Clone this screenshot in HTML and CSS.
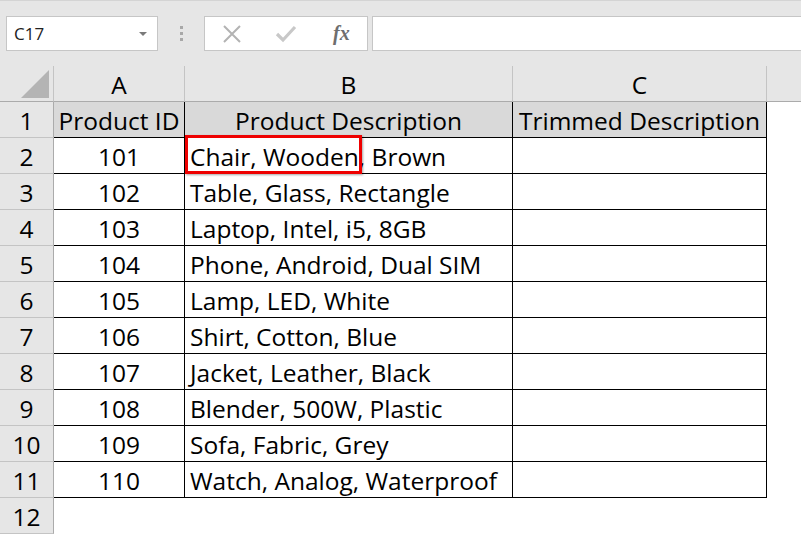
FILE: index.html
```html
<!DOCTYPE html>
<html lang="en">
<head>
    <meta charset="UTF-8">
    <title>Trimmed Description</title>
    <link rel="stylesheet" href="styles.css">
</head>
<body>
    <div class="formula-bar">
        <div class="name-box">
            <span>C17</span>
            <span class="drop"></span>
        </div>
        <div class="grip"><span></span><span></span><span></span></div>
        <div class="fx-buttons">
            <svg width="20" height="20" viewBox="0 0 20 20"><path d="M2 2 L18 18 M18 2 L2 18" stroke="#b3b3b3" stroke-width="2" fill="none"/></svg>
            <svg width="22" height="20" viewBox="0 0 22 20"><path d="M2 10 L8 16 L20 3" stroke="#c8c8c8" stroke-width="3.2" fill="none"/></svg>
            <span class="fx">fx</span>
        </div>
        <div class="formula-input"></div>
    </div>

    <div class="sheet">
        <!-- column headers -->
        <div class="corner"><div class="tri"></div></div>
        <div class="col-head">A</div>
        <div class="col-head">B</div>
        <div class="col-head">C</div>
        <div class="col-head last"></div>

        <div class="row-head">1</div>
        <div class="cell title">Product ID</div>
        <div class="cell title">Product Description</div>
        <div class="cell title">Trimmed Description</div>
        <div class="blank"></div>

        <div class="row-head">2</div>
        <div class="cell num">101</div>
        <div class="cell text"><span class="mark"></span>Chair, Wooden, Brown</div>
        <div class="cell"></div>
        <div class="blank"></div>

        <div class="row-head">3</div>
        <div class="cell num">102</div>
        <div class="cell text">Table, Glass, Rectangle</div>
        <div class="cell"></div>
        <div class="blank"></div>

        <div class="row-head">4</div>
        <div class="cell num">103</div>
        <div class="cell text">Laptop, Intel, i5, 8GB</div>
        <div class="cell"></div>
        <div class="blank"></div>

        <div class="row-head">5</div>
        <div class="cell num">104</div>
        <div class="cell text">Phone, Android, Dual SIM</div>
        <div class="cell"></div>
        <div class="blank"></div>

        <div class="row-head">6</div>
        <div class="cell num">105</div>
        <div class="cell text">Lamp, LED, White</div>
        <div class="cell"></div>
        <div class="blank"></div>

        <div class="row-head">7</div>
        <div class="cell num">106</div>
        <div class="cell text">Shirt, Cotton, Blue</div>
        <div class="cell"></div>
        <div class="blank"></div>

        <div class="row-head">8</div>
        <div class="cell num">107</div>
        <div class="cell text">Jacket, Leather, Black</div>
        <div class="cell"></div>
        <div class="blank"></div>

        <div class="row-head">9</div>
        <div class="cell num">108</div>
        <div class="cell text">Blender, 500W, Plastic</div>
        <div class="cell"></div>
        <div class="blank"></div>

        <div class="row-head">10</div>
        <div class="cell num">109</div>
        <div class="cell text">Sofa, Fabric, Grey</div>
        <div class="cell"></div>
        <div class="blank"></div>

        <div class="row-head">11</div>
        <div class="cell num">110</div>
        <div class="cell text">Watch, Analog, Waterproof</div>
        <div class="cell"></div>
        <div class="blank"></div>

        <div class="row-head">12</div>
        <div class="blank"></div>
        <div class="blank"></div>
        <div class="blank"></div>
        <div class="blank"></div>
    </div>
</body>
</html>
```

FILE: styles.css
```css
body {
    margin: 0;
    padding: 0;
    width: 801px;
    height: 535px;
    overflow: hidden;
    background: #fff;
    font-family: 'Open Sans', 'Noto Sans', sans-serif;
    color: #000;
}

/* top formula bar */
.formula-bar {
    height: 66px;
    box-sizing: border-box;
    background: #e6e6e6;
    border-top: 1px solid #d4d4d4;
    display: flex;
    align-items: flex-start;
    padding: 15px 0 0 6px;
}
.name-box {
    width: 152px;
    height: 35px;
    box-sizing: border-box;
    background: #fff;
    border: 1px solid #c6c6c6;
    display: flex;
    align-items: center;
    justify-content: space-between;
    padding: 0 10px 0 7px;
    font-size: 17px;
    color: #222;
}
.drop {
    width: 0;
    height: 0;
    border-left: 4px solid transparent;
    border-right: 4px solid transparent;
    border-top: 4px solid #7a7a7a;
}
.grip {
    width: 46px;
    height: 35px;
    display: flex;
    flex-direction: column;
    align-items: center;
    justify-content: center;
    gap: 3px;
}
.grip span {
    width: 3px;
    height: 3px;
    background: #a8a8a8;
}
.fx-buttons {
    width: 164px;
    height: 35px;
    box-sizing: border-box;
    background: #fff;
    border: 1px solid #c6c6c6;
    display: flex;
    align-items: center;
    padding-left: 17px;
    gap: 33px;
}
.fx {
    font-family: 'Liberation Serif', serif;
    font-style: italic;
    font-weight: bold;
    font-size: 20px;
    color: #6e6e6e;
    margin-left: 3px;
}
.formula-input {
    flex: 1;
    height: 35px;
    box-sizing: border-box;
    margin-left: 4px;
    background: #fff;
    border: 1px solid #c6c6c6;
    border-right: none;
}

/* sheet grid */
.sheet {
    display: grid;
    grid-template-columns: 54px 131px 328px 254px 1fr;
    grid-auto-rows: 36px;
    font-size: 24.5px;
}
.corner {
    background: #e6e6e6;
    border-bottom: 1px solid #ababab;
    border-right: 1px solid #c4c4c4;
    position: relative;
}
.tri {
    position: absolute;
    right: 4px;
    bottom: 3px;
    width: 0;
    height: 0;
    border-left: 28px solid transparent;
    border-bottom: 28px solid #b4b4b4;
}
.col-head {
    background: #e6e6e6;
    border-bottom: 1px solid #ababab;
    border-right: 1px solid #c4c4c4;
    display: flex;
    align-items: center;
    justify-content: center;
    padding-top: 2px;
}
.col-head.last {
    border-right: none;
}
.row-head {
    background: #e6e6e6;
    border-bottom: 1px solid #c4c4c4;
    border-right: 1px solid #ababab;
    display: flex;
    align-items: center;
    justify-content: center;
    padding-top: 1px;
}
.cell {
    border-right: 1px solid #000;
    border-bottom: 1px solid #000;
    display: flex;
    align-items: center;
    padding-top: 1px;
    white-space: nowrap;
}
.title {
    background: #d9d9d9;
    justify-content: center;
}
.num {
    justify-content: center;
}
.text {
    padding-left: 5px;
    position: relative;
}
.blank {
    background: #fff;
}

/* red highlight over "Chair, Wooden" */
.mark {
    position: absolute;
    left: 0;
    top: -3px;
    width: 177px;
    height: 39px;
    box-sizing: border-box;
    border: 3px solid #ee0000;
    box-shadow: 1px 1px 2px rgba(0, 0, 0, 0.35);
}
```
